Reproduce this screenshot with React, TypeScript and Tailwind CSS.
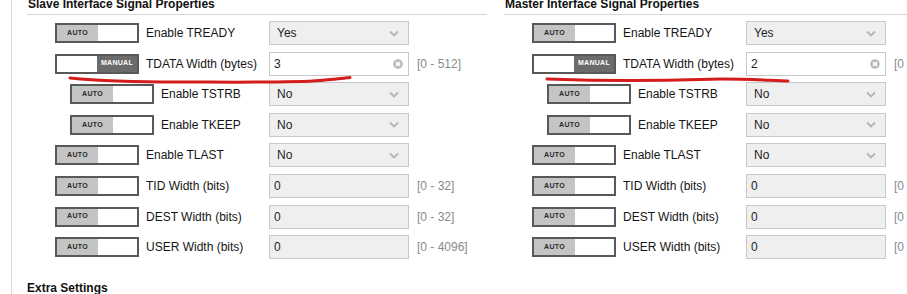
type Row = {
  label: string
  mode: "auto" | "manual"
  kind: "select" | "input" | "disabled"
  value: string
  range?: string
  indent?: boolean
}

const slaveRows: Row[] = [
  { label: "Enable TREADY", mode: "auto", kind: "select", value: "Yes" },
  { label: "TDATA Width (bytes)", mode: "manual", kind: "input", value: "3", range: "[0 - 512]" },
  { label: "Enable TSTRB", mode: "auto", kind: "select", value: "No", indent: true },
  { label: "Enable TKEEP", mode: "auto", kind: "select", value: "No", indent: true },
  { label: "Enable TLAST", mode: "auto", kind: "select", value: "No" },
  { label: "TID Width (bits)", mode: "auto", kind: "disabled", value: "0", range: "[0 - 32]" },
  { label: "DEST Width (bits)", mode: "auto", kind: "disabled", value: "0", range: "[0 - 32]" },
  { label: "USER Width (bits)", mode: "auto", kind: "disabled", value: "0", range: "[0 - 4096]" },
]

const masterRows: Row[] = slaveRows.map((r) =>
  r.label.startsWith("TDATA") ? { ...r, value: "2" } : r
)

function Toggle({ mode }: { mode: "auto" | "manual" }) {
  return (
    <div className="flex h-[20px] w-[84px] shrink-0 border-2 border-[#585858] bg-white">
      {mode === "auto" ? (
        <>
          <div className="flex w-[41px] items-center justify-center bg-[#c4c4c4] text-[7px] font-bold tracking-[0.3px] text-[#2a2a2a]">
            AUTO
          </div>
          <div className="flex-1" />
        </>
      ) : (
        <>
          <div className="w-[40px]" />
          <div className="flex flex-1 items-center justify-center bg-[#6b6b6b] text-[7px] font-bold tracking-[0.3px] text-white">
            MANUAL
          </div>
        </>
      )}
    </div>
  )
}

function Chevron() {
  return (
    <svg width="10" height="7" viewBox="0 0 10 7" className="mr-[9px]">
      <path d="M1 1.5 L5 5.5 L9 1.5" fill="none" stroke="#b4b4b4" strokeWidth="1.8" />
    </svg>
  )
}

function ClearIcon() {
  return (
    <svg width="10" height="10" viewBox="0 0 10 10" className="mr-[5px]">
      <circle cx="5" cy="5" r="4.8" fill="#bababa" />
      <path d="M3.1 3.1 L6.9 6.9 M6.9 3.1 L3.1 6.9" stroke="#fff" strokeWidth="1.6" />
    </svg>
  )
}

function Field({ row }: { row: Row }) {
  if (row.kind === "select") {
    return (
      <div className="flex h-[24px] w-[140px] shrink-0 items-center justify-between border border-[#c8c8c8] bg-[#efefef] pl-[7px] text-[12px] text-[#1e1e1e]">
        <span>{row.value}</span>
        <Chevron />
      </div>
    )
  }
  if (row.kind === "input") {
    return (
      <div className="flex h-[24px] w-[140px] shrink-0 items-center justify-between border border-[#c8c8c8] bg-white pl-[4px] text-[12px] text-[#1e1e1e]">
        <span>{row.value}</span>
        <ClearIcon />
      </div>
    )
  }
  return (
    <div className="flex h-[24px] w-[140px] shrink-0 items-center border border-[#c8c8c8] bg-[#efefef] pl-[4px] text-[12px] text-[#1e1e1e]">
      {row.value}
    </div>
  )
}

function Section({ title, rows, lineWidth }: { title: string; rows: Row[]; lineWidth: string }) {
  return (
    <div className="flex flex-col">
      <div className={`-mt-[3px] border-b border-[#d6d6d6] pb-[3px] pl-[1px] text-[12px] leading-[14px] font-bold text-[#111] ${lineWidth}`}>
        {title}
      </div>
      <div className="mt-[6px] flex flex-col gap-[6.6px]">
        {rows.map((row) => (
          <div key={row.label} className="flex h-[24px] items-center whitespace-nowrap">
            <div className={`flex w-[242px] shrink-0 items-center ${row.indent ? "pl-[43px]" : "pl-[28px]"}`}>
              <Toggle mode={row.mode} />
              <span className="ml-[7px] text-[12px] text-[#151515]">{row.label}</span>
            </div>
            <Field row={row} />
            {row.range && <span className="ml-[8px] text-[12px] text-[#8a8a8a]">{row.range}</span>}
          </div>
        ))}
      </div>
    </div>
  )
}

export default function App() {
  return (
    <div className="relative h-[294px] w-[907px] overflow-hidden bg-white font-['Liberation_Sans',Arial,sans-serif]">
      <div className="ml-[11px] h-full border-l border-[#dadada] pl-[15px]">
        <div className="grid grid-cols-[477px_1fr]">
          <Section title="Slave Interface Signal Properties" rows={slaveRows} lineWidth="w-[460px]" />
          <Section title="Master Interface Signal Properties" rows={masterRows} lineWidth="w-full" />
        </div>
        <div className="mt-[22px] text-[12px] leading-[14px] font-bold text-[#111]">Extra Settings</div>
      </div>
      <svg className="pointer-events-none absolute inset-0" width="907" height="294">
        <path
          d="M70 78 C 100 81, 140 82, 180 82 S 290 83, 320 80.5 S 345 78, 350 77.5"
          fill="none"
          stroke="#d41c1c"
          strokeWidth="3"
          strokeLinecap="round"
        />
        <path
          d="M547 79 C 590 80.5, 650 81, 700 79.5 C 730 78, 760 80, 788 81"
          fill="none"
          stroke="#d41c1c"
          strokeWidth="3"
          strokeLinecap="round"
        />
      </svg>
    </div>
  )
}
